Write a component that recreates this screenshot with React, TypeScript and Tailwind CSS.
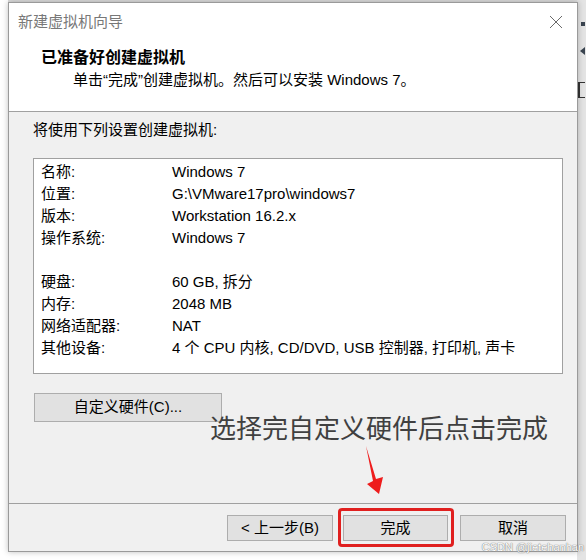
import React from "react";

const rows: [string, string][] = [
  ["名称:", "Windows 7"],
  ["位置:", "G:\\VMware17pro\\windows7"],
  ["版本:", "Workstation 16.2.x"],
  ["操作系统:", "Windows 7"],
  ["", ""],
  ["硬盘:", "60 GB, 拆分"],
  ["内存:", "2048 MB"],
  ["网络适配器:", "NAT"],
  ["其他设备:", "4 个 CPU 内核, CD/DVD, USB 控制器, 打印机, 声卡"],
];

function Btn({ children, className = "" }: { children: React.ReactNode; className?: string }) {
  return (
    <div
      className={
        "flex items-center justify-center bg-[#e1e1e1] border border-[#adadad] text-[15px] text-black " +
        className
      }
    >
      {children}
    </div>
  );
}

export default function App() {
  return (
    <div className="relative w-[586px] h-[560px] overflow-hidden bg-white font-['Liberation_Sans','Noto_Sans_CJK_SC',sans-serif]">
      {/* background desktop bits */}
      <div className="absolute left-[8px] top-0 w-[578px] h-[3px] bg-[#dcdcdc]" />
      <div className="absolute right-0 top-0 w-[9px] h-[560px] bg-[#e4e4e4] overflow-hidden">
        <div className="absolute left-[4px] top-[22px] w-[4px] h-[4px] bg-[#3a4550]" />
        <div className="absolute left-[3px] top-[47px] w-0 h-0 border-y-[4px] border-y-transparent border-r-[5px] border-r-[#3a4550]" />
        <div className="absolute left-[1px] top-[82px] w-[7px] h-[16px] border-l-2 border-y border-[#333]" />
      </div>

      {/* dialog window */}
      <div className="relative ml-[8px] mt-[2px] w-[570px] h-[550px] border border-[#9a9a9a] bg-[#f0f0f0] shadow-[0_0_6px_rgba(0,0,0,0.25)] flex flex-col">
        {/* header */}
        <div className="h-[109px] bg-white border-b border-[#a0a0a0] flex flex-col">
          <div className="h-[38px] flex items-center justify-between pl-[9px] pr-[14px]">
            <span className="text-[15px] text-[#787878]">新建虚拟机向导</span>
            <svg width="14" height="14" viewBox="0 0 14 14">
              <path d="M1 1 L13 13 M13 1 L1 13" stroke="#6a6a6a" strokeWidth="1" fill="none" />
            </svg>
          </div>
          <div className="pl-[32px] mt-[7px] text-[16px] leading-[20px] font-bold text-black">
            已准备好创建虚拟机
          </div>
          <div className="pl-[64px] mt-[2px] text-[15px] leading-[20px] text-black">
            单击“完成”创建虚拟机。然后可以安装 Windows 7。
          </div>
        </div>

        {/* body */}
        <div className="h-[391px] px-[24px] pt-[8px] flex flex-col">
          <div className="text-[15px] leading-[20px] text-black">将使用下列设置创建虚拟机:</div>
          <div className="mt-[18px] w-[530px] h-[216px] bg-white border border-[#a0a0a0] pt-[2px] px-[7px]">
            {rows.map(([k, v], i) => (
              <div key={i} className="flex h-[22px] items-center text-[15px] text-black">
                <span className="w-[131px]">{k}</span>
                <span>{v}</span>
              </div>
            ))}
          </div>
          <Btn className="mt-[19px] ml-[1px] w-[188px] h-[29px]">自定义硬件(C)...</Btn>
        </div>

        {/* footer */}
        <div className="flex-1 border-t border-[#a0a0a0] flex justify-end items-start pt-[11px] pr-[11px] gap-[10px]">
          <Btn className="w-[106px] h-[26px]">&lt; 上一步(B)</Btn>
          <Btn className="w-[105px] h-[26px]">完成</Btn>
          <Btn className="w-[106px] h-[26px] ml-[2px]">取消</Btn>
        </div>
      </div>

      {/* annotation overlay */}
      <div className="absolute left-[210px] top-[411px] text-[26px] leading-[32px] text-[#404040] font-['Noto_Sans_CJK_SC',sans-serif]">
        选择完自定义硬件后点击完成
      </div>
      <svg className="absolute left-0 top-0" width="586" height="560" viewBox="0 0 586 560">
        <polygon points="366,446 376,479 383,477 379,494 367,484 373,481" fill="#ee1c1c" />
      </svg>
      <div className="absolute left-[338px] top-[508px] w-[116px] h-[39px] border-[3px] border-[#e0201f] rounded-[4px]" />

      {/* watermark */}
      <div className="absolute right-[2px] top-[541px] text-[11px] leading-[13px] text-white whitespace-nowrap [text-shadow:0_0_1px_#777,0_0_1px_#777]">
        CSDN @jietehanhan
      </div>
    </div>
  );
}
